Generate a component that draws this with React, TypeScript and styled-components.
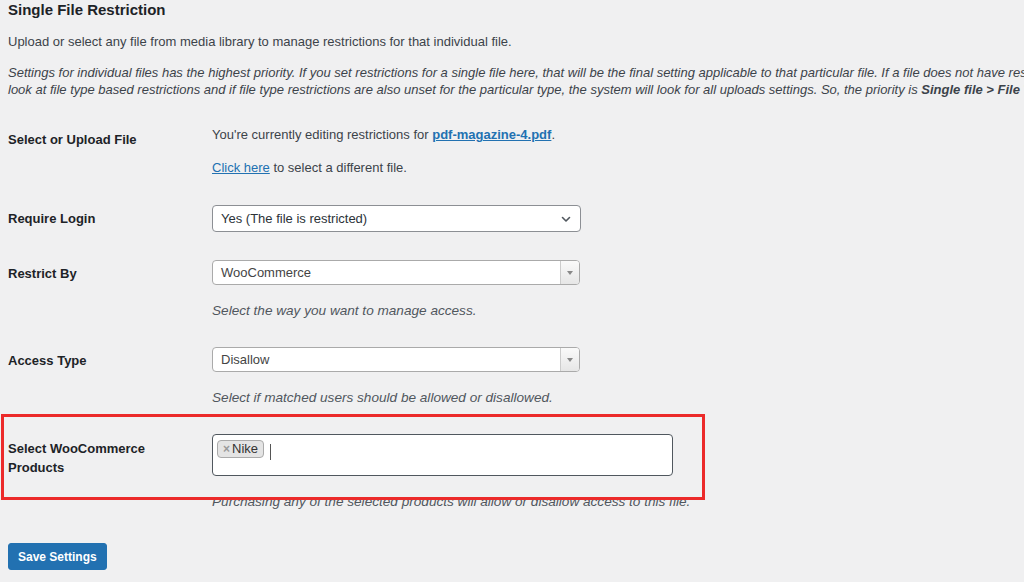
import React from 'react'
import styled, { createGlobalStyle } from 'styled-components'

const GlobalStyle = createGlobalStyle`
  html, body {
    margin: 0;
    padding: 0;
    background: #f0f0f1;
    overflow: hidden;
  }
  body {
    font-family: 'Liberation Sans', Arial, sans-serif;
    font-size: 13px;
    color: #3c434a;
  }
`

const Page = styled.div`
  padding: 0 8px;
  width: 1200px;
`

const Title = styled.h2`
  margin: 0;
  font-size: 15px;
  line-height: 20px;
  font-weight: 700;
  color: #1d2327;
`

const Intro = styled.p`
  margin: 13px 0 0;
  line-height: 18px;
`

const Note = styled.p`
  margin: 13px 0 0;
  line-height: 17px;
  font-style: italic;
  white-space: nowrap;

  strong {
    font-weight: 700;
  }
`

const FormTable = styled.div`
  margin-top: 14px;
  display: flex;
  flex-direction: column;
`

const Row = styled.div`
  position: relative;
  display: grid;
  grid-template-columns: 204px 1fr;
  padding: 14px 0;
`

const Label = styled.div<{ $lh?: number }>`
  padding-top: 5px;
  font-weight: 700;
  color: #1d2327;
  line-height: ${(p) => p.$lh ?? 18}px;
`

const Field = styled.div`
  display: flex;
  flex-direction: column;
`

const Line = styled.p<{ $gap?: number }>`
  margin: ${(p) => p.$gap ?? 0}px 0 0;
  line-height: 18px;
`

const Link = styled.a<{ $bold?: boolean }>`
  color: #2271b1;
  text-decoration: underline;
  font-weight: ${(p) => (p.$bold ? 700 : 400)};
`

const NativeSelect = styled.div`
  box-sizing: border-box;
  width: 369px;
  height: 27px;
  background: #fff;
  border: 1px solid #8c8f94;
  border-radius: 4px;
  display: flex;
  align-items: center;
  justify-content: space-between;
  padding: 0 8px 0 8px;
  color: #2c3338;
`

const ComboSelect = styled.div`
  box-sizing: border-box;
  width: 368px;
  height: 25px;
  background: #fff;
  border: 1px solid #aaa;
  border-radius: 4px;
  display: flex;
  align-items: stretch;
  color: #444;
  overflow: hidden;
`

const ComboValue = styled.span`
  flex: 1;
  display: flex;
  align-items: center;
  padding-left: 8px;
`

const ComboArrow = styled.span`
  width: 18px;
  border-left: 1px solid #ccc;
  background: linear-gradient(#fafafa, #e6e6e6);
  display: flex;
  align-items: center;
  justify-content: center;

  &::after {
    content: '';
    border-left: 3.5px solid transparent;
    border-right: 3.5px solid transparent;
    border-top: 4px solid #888;
  }
`

const Description = styled.p`
  margin: 18px 0 0;
  line-height: 16px;
  font-size: 13.6px;
  font-style: italic;
  color: #50575e;
`

const MultiSelect = styled.div`
  box-sizing: border-box;
  width: 461px;
  height: 42px;
  background: #fff;
  border: 1px solid #50575e;
  border-radius: 4px;
  display: flex;
  align-items: flex-start;
  padding: 5px 4px;
  gap: 6px;
`

const Tag = styled.span`
  display: inline-flex;
  align-items: center;
  gap: 2px;
  height: 18px;
  box-sizing: border-box;
  padding: 0 5px 0 5px;
  background: #e4e4e4;
  border: 1px solid #aaa;
  border-radius: 4px;
  color: #333;
  line-height: 16px;
`

const TagRemove = styled.span`
  color: #999;
  font-weight: 700;
  font-size: 12px;
`

const Caret = styled.span`
  width: 1px;
  height: 16px;
  margin-top: 4px;
  background: #555;
`

const Highlight = styled.div`
  position: absolute;
  left: -7px;
  top: -6px;
  width: 704px;
  height: 86px;
  box-sizing: border-box;
  border: 3px solid #ec2a2a;
  pointer-events: none;
`

const SaveButton = styled.button`
  margin-top: 19px;
  height: 27px;
  padding: 0 9px;
  border: 1px solid #2271b1;
  border-radius: 3px;
  background: #2271b1;
  color: #fff;
  font-family: inherit;
  font-size: 12px;
  font-weight: 700;
  cursor: pointer;
`

const Chevron = () => (
  <svg width="12" height="12" viewBox="0 0 12 12" fill="none">
    <path d="M2.5 4.5 6 8l3.5-3.5" stroke="#50575e" strokeWidth="1.6" strokeLinecap="round" strokeLinejoin="round" />
  </svg>
)

export default function App() {
  return (
    <Page>
      <GlobalStyle />
      <Title>Single File Restriction</Title>
      <Intro>Upload or select any file from media library to manage restrictions for that individual file.</Intro>
      <Note>
        Settings for individual files has the highest priority. If you set restrictions for a single file here, that
        will be the final setting applicable to that particular file. If a file does not have restrictions set, the system will
        <br />
        look at file type based restrictions and if file type restrictions are also unset for the particular type, the
        system will look for all uploads settings. So, the priority is <strong>Single file &gt; File Type &gt; All uploads</strong>.
      </Note>

      <FormTable>
        <Row>
          <Label>Select or Upload File</Label>
          <Field>
            <Line>
              You're currently editing restrictions for <Link $bold href="#">pdf-magazine-4.pdf</Link>.
            </Line>
            <Line $gap={15}>
              <Link href="#">Click here</Link> to select a different file.
            </Line>
          </Field>
        </Row>

        <Row>
          <Label>Require Login</Label>
          <Field>
            <NativeSelect>
              <span>Yes (The file is restricted)</span>
              <Chevron />
            </NativeSelect>
          </Field>
        </Row>

        <Row>
          <Label>Restrict By</Label>
          <Field>
            <ComboSelect>
              <ComboValue>WooCommerce</ComboValue>
              <ComboArrow />
            </ComboSelect>
            <Description>Select the way you want to manage access.</Description>
          </Field>
        </Row>

        <Row>
          <Label>Access Type</Label>
          <Field>
            <ComboSelect>
              <ComboValue>Disallow</ComboValue>
              <ComboArrow />
            </ComboSelect>
            <Description>Select if matched users should be allowed or disallowed.</Description>
          </Field>
        </Row>

        <Row>
          <Label $lh={19}>
            Select WooCommerce
            <br />
            Products
          </Label>
          <Field>
            <MultiSelect>
              <Tag>
                <TagRemove>×</TagRemove>Nike
              </Tag>
              <Caret />
            </MultiSelect>
            <Description>Purchasing any of the selected products will allow or disallow access to this file.</Description>
          </Field>
          <Highlight />
        </Row>
      </FormTable>

      <SaveButton>Save Settings</SaveButton>
    </Page>
  )
}
